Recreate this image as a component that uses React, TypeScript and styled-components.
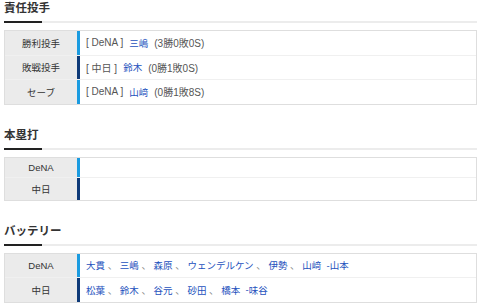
import React from "react";
import styled, { createGlobalStyle } from "styled-components";

const GlobalStyle = createGlobalStyle`
    html, body {
        margin: 0;
        padding: 0;
        background: #fff;
    }
    body {
        font-family: "Liberation Sans", "Noto Sans CJK JP", sans-serif;
        color: #444;
    }
`;

const DENA = "#1a9be0";
const DRAGONS = "#0e3a78";

const Page = styled.div`
    width: 480px;
    padding: 0 3px 0 4px;
    box-sizing: border-box;
`;

const Section = styled.section`
    & + & {
        margin-top: 22px;
    }
`;

const Title = styled.h2`
    margin: 0 0 7px;
    padding: 0 0 9px;
    font-size: 11.5px;
    line-height: 14px;
    font-weight: bold;
    color: #333;
    font-family: "Noto Sans CJK JP", sans-serif;
    background:
        linear-gradient(#222, #222) left bottom / 38px 2px no-repeat,
        linear-gradient(#ececec, #ececec) left bottom / 100% 2px no-repeat;
`;

const Table = styled.div`
    border: 1px solid #dedede;
    display: flex;
    flex-direction: column;
`;

const Row = styled.div<{ $h: number }>`
    display: flex;
    height: ${(p) => p.$h}px;
    & + & {
        border-top: 1px solid #f0f0f0;
    }
`;

const Label = styled.div`
    width: 72px;
    flex: none;
    background: #ebebeb;
    display: flex;
    align-items: center;
    justify-content: center;
    font-size: 9.5px;
    color: #333;
`;

const Value = styled.div<{ $team: string }>`
    flex: 1;
    display: flex;
    align-items: center;
    border-left: 3px solid ${(p) => p.$team};
    padding-left: 6px;
    font-size: 9.5px;
    color: #555;
    white-space: pre;
`;

const Team = styled.span`
    color: #555;
    font-size: 10px;
    margin-right: 6px;
`;

const Name = styled.span`
    color: #2451bd;
`;

const Sep = styled.span`
    color: #888;
`;

const Record = styled.span`
    color: #555;
    font-size: 10px;
    margin-left: 6px;
`;

type Pitcher = { label: string; team: string; color: string; name: string; rec: string };

const pitchers: Pitcher[] = [
    { label: "勝利投手", team: "[ DeNA ]", color: DENA, name: "三嶋", rec: "(3勝0敗0S)" },
    { label: "敗戦投手", team: "[ 中日 ]", color: DRAGONS, name: "鈴木", rec: "(0勝1敗0S)" },
    { label: "セーブ", team: "[ DeNA ]", color: DENA, name: "山﨑", rec: "(0勝1敗8S)" },
];

const battery = [
    { team: "DeNA", color: DENA, pitchers: ["大貫", "三嶋", "森原", "ウェンデルケン", "伊勢", "山﨑"], catcher: "山本" },
    { team: "中日", color: DRAGONS, pitchers: ["松葉", "鈴木", "谷元", "砂田", "橋本"], catcher: "味谷" },
];

function App(): JSX.Element {
    return (
        <Page>
            <GlobalStyle />
            <Section>
                <Title>責任投手</Title>
                <Table>
                    {pitchers.map((p) => (
                        <Row key={p.label} $h={23.5}>
                            <Label>{p.label}</Label>
                            <Value $team={p.color}>
                                <Team>{p.team}</Team>
                                <Name>{p.name}</Name>
                                <Record>{p.rec}</Record>
                            </Value>
                        </Row>
                    ))}
                </Table>
            </Section>

            <Section>
                <Title>本塁打</Title>
                <Table>
                    <Row $h={19}>
                        <Label>DeNA</Label>
                        <Value $team={DENA} />
                    </Row>
                    <Row $h={22}>
                        <Label>中日</Label>
                        <Value $team={DRAGONS} />
                    </Row>
                </Table>
            </Section>

            <Section>
                <Title>バッテリー</Title>
                <Table>
                    {battery.map((b) => (
                        <Row key={b.team} $h={23.5}>
                            <Label>{b.team}</Label>
                            <Value $team={b.color}>
                                {b.pitchers.map((n, i) => (
                                    <React.Fragment key={n}>
                                        {i > 0 && <Sep> 、 </Sep>}
                                        <Name>{n}</Name>
                                    </React.Fragment>
                                ))}
                                <Name>{"  -"}</Name>
                                <Name>{b.catcher}</Name>
                            </Value>
                        </Row>
                    ))}
                </Table>
            </Section>
        </Page>
    );
}

export default App;
